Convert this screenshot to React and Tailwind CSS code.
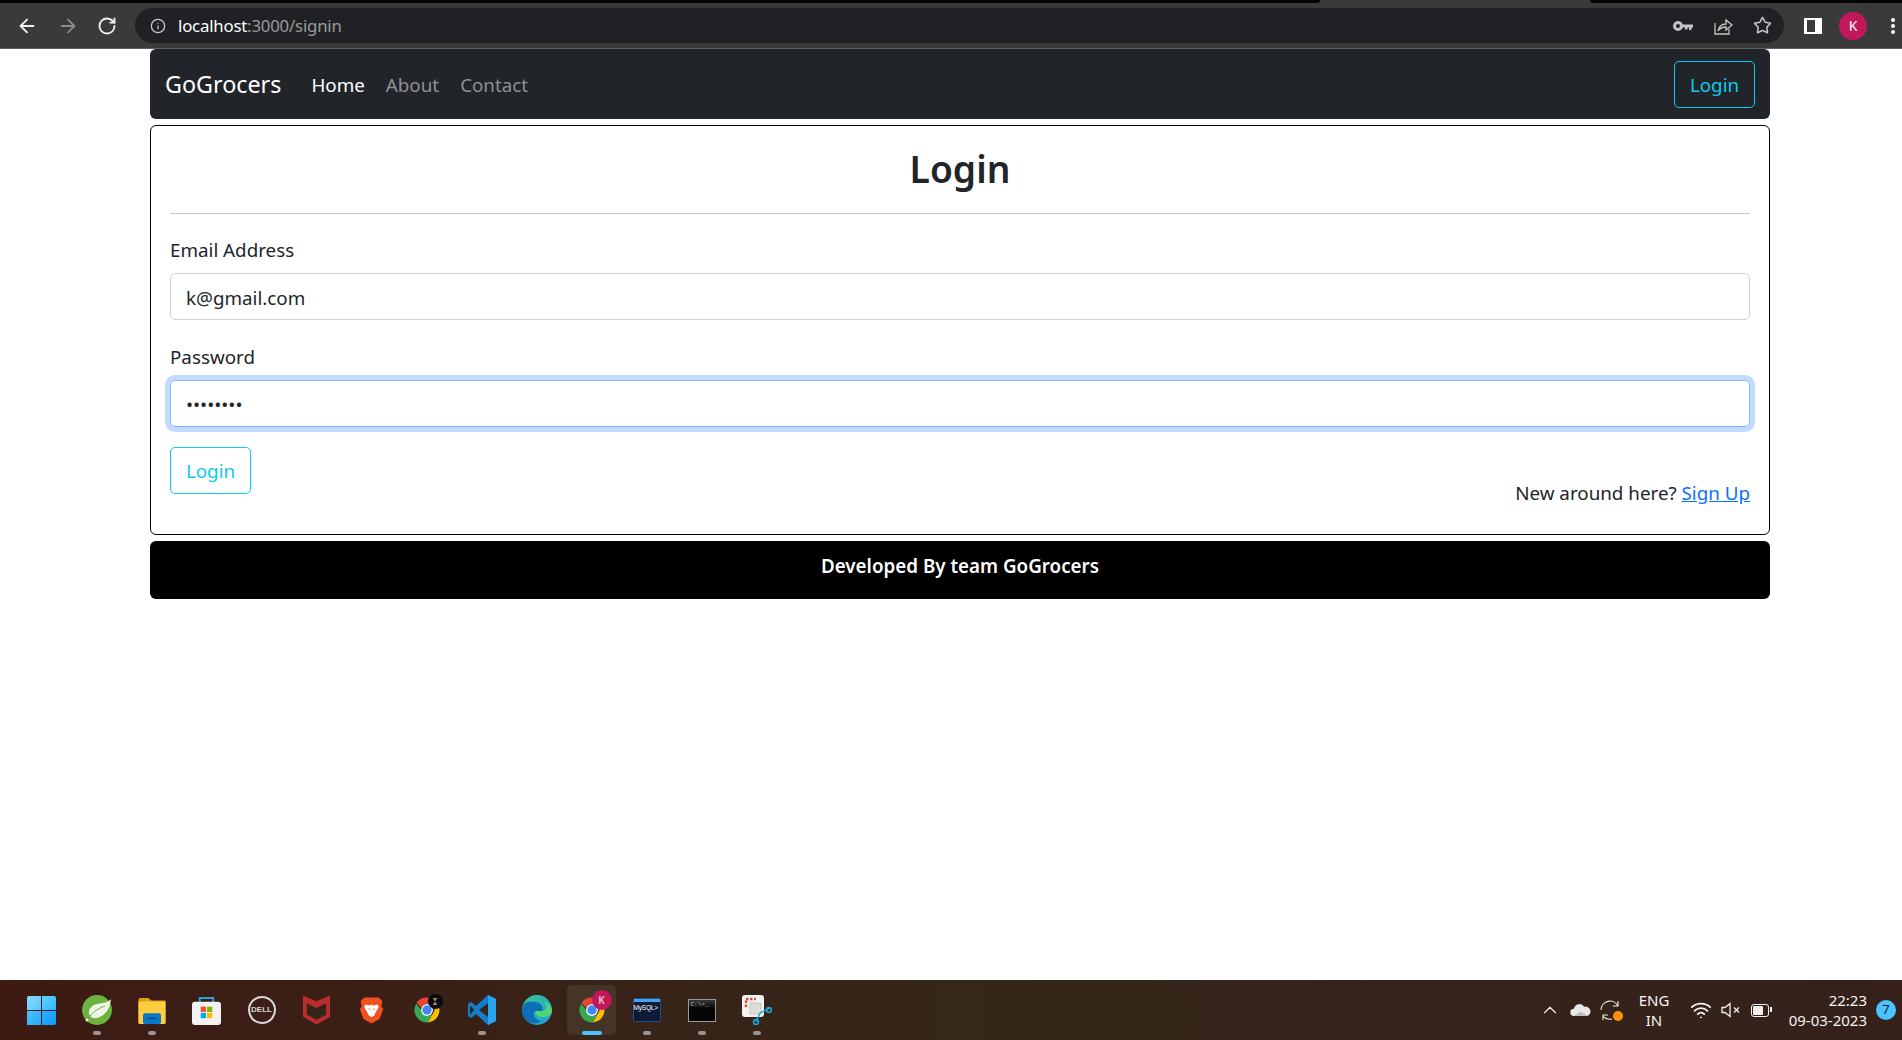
import React from 'react';
import { ArrowLeft, ArrowRight, RotateCw, Info, Star, ChevronUp, Wifi } from 'lucide-react';

const font = "font-['Noto_Sans','Open_Sans',sans-serif]";

const ChromeLogo = ({ badge }) => (
  <div className="relative w-[30px] h-[30px]">
    <svg viewBox="0 0 48 48" className="w-[30px] h-[30px]">
      <path d="M24 4a20 20 0 0 1 17.300 10H24a10 10 0 0 0-9.400 6.600L7.400 11.800A20 20 0 0 1 24 4z" fill="#ea4335" />
      <path d="M41.300 14A20 20 0 0 1 25 44l8.700-15A10 10 0 0 0 33 15z" fill="#fbbc04" />
      <path d="M7 13.500A20 20 0 0 0 25 44l8.200-14.200a10 10 0 0 1-17.500-4.200z" fill="#34a853" />
      <circle cx="24" cy="24" r="9.500" fill="#fff" />
      <circle cx="24" cy="24" r="7.500" fill="#4285f4" />
    </svg>
    {badge}
  </div>
);

const Spring = () => (
  <svg viewBox="0 0 30 30" className="w-[30px] h-[30px]">
    <circle cx="15" cy="15" r="15" fill="#6db33f" />
    <path d="M29 4c-1 10-6 17-14 19-4 1-7-1-8-4-1-5 3-9 8-10 5-1 11-1 14-5z" fill="#eef5e6" />
    <path d="M8 21c4-5 9-8 15-10" fill="none" stroke="#6db33f" strokeWidth="1" />
    <circle cx="5" cy="25" r="1.500" fill="#eef5e6" />
  </svg>
);

const Folder = () => (
  <svg viewBox="0 0 30 30" className="w-[30px] h-[27px]">
    <path d="M0 3a2 2 0 0 1 2-2h9l3 3h16v25H0z" fill="#dfa30e" />
    <rect x="0" y="5" width="30" height="25" rx="1" fill="#ffcd3f" />
    <rect x="5" y="18" width="20" height="12" rx="2" fill="#0a78c8" />
    <rect x="10" y="23" width="10" height="1.500" fill="#043f70" />
  </svg>
);

const Store = () => (
  <svg viewBox="0 0 30 30" className="w-[29px] h-[29px]">
    <path d="M8 8V2h14v6" fill="none" stroke="#1fa8e0" strokeWidth="2" />
    <rect x="0" y="6" width="30" height="24" rx="3" fill="#f2f2f2" />
    <rect x="9" y="11" width="5.500" height="5.500" fill="#f0512a" />
    <rect x="15.500" y="11" width="5.500" height="5.500" fill="#7eb900" />
    <rect x="9" y="17.500" width="5.500" height="5.500" fill="#01a5f0" />
    <rect x="15.500" y="17.500" width="5.500" height="5.500" fill="#ffb900" />
  </svg>
);

const Dell = () => (
  <div className="w-[28px] h-[28px] rounded-full border-2 border-[#d8d8d8] flex items-center justify-center text-[8px] font-bold text-[#d8d8d8] font-['Liberation_Sans',sans-serif]">
    DELL
  </div>
);

const McAfee = () => (
  <svg viewBox="0 0 28 30" className="w-[27px] h-[30px]">
    <path d="M0 0l14 6 14-6v22l-14 8-14-8z" fill="#b92d2d" />
    <path d="M4 8l10 5 10-5v12l-10 5-10-5z" fill="#33251a" />
  </svg>
);

const Brave = () => (
  <svg viewBox="0 0 30 30" className="w-[27px] h-[30px]">
    <path d="M7 1h16l4 4-1 6 2 3-4 11-9 5-9-5-4-11 2-3-1-6z" fill="#f1501f" />
    <path d="M8 9l5 1 2-1 2 1 5-1 1 3-3 5-2 4-3 2-3-2-2-4-3-5z" fill="#fff" />
    <path d="M11 13l3 1-1 1zM19 13l-3 1 1 1z" fill="#f1501f" />
  </svg>
);

const VsCode = () => (
  <svg viewBox="0 0 30 30" className="w-[30px] h-[30px]">
    <path d="M21 0l8 4v22l-8 4-12-11-5 4-3-2v-12l3-2 5 4z" fill="#0f7fcc" />
    <path d="M21 0l8 4v22l-8 4z" fill="#2aa3ef" />
    <path d="M21 8v14l-9-7z" fill="#33251a" />
    <path d="M4 11l3 4-3 4-1-1v-6z" fill="#33251a" />
  </svg>
);

const Edge = () => (
  <svg viewBox="0 0 30 30" className="w-[30px] h-[30px]">
    <defs>
      <linearGradient id="edge" x1="0" y1="0" x2="1" y2="1">
        <stop offset="0" stopColor="#39c98a" />
        <stop offset="1" stopColor="#1b9de2" />
      </linearGradient>
    </defs>
    <circle cx="15" cy="15" r="15" fill="url(#edge)" />
    <path d="M0 15C1 6 8 6 14 7c6 1 8 6 6 9h-7c-3 3 0 9 6 10-10 7-19-2-19-11z" fill="#0c6fb8" />
    <path d="M30 16c0-4-3-8-8-9 4 3 3 9-2 9h-6c-1 3 2 6 6 6 5 0 10-1 10-6z" fill="#5ee05c" opacity=".8" />
  </svg>
);

const MySql = () => (
  <div className="w-[28px] h-[24px] bg-[#0d1b36] border border-[#1f4f8f] rounded-[2px] flex flex-col">
    <div className="h-[3px] shrink-0 bg-[#4aa3e8]" />
    <span className="text-[6.500px] leading-[12px] tracking-[-0.2px] whitespace-nowrap text-white font-['Liberation_Sans',sans-serif]">MySQL&gt;</span>
  </div>
);

const Cmd = () => (
  <div className="w-[28px] h-[23px] bg-gradient-to-b from-[#3a3a3a] to-[#050505] to-40% border border-[#9a9a9a] flex flex-col">
    <span className="text-[6px] leading-[9px] pl-[2px] text-[#cccccc] font-['Liberation_Mono',monospace]">C:\&gt;_</span>
  </div>
);

const Snip = () => (
  <svg viewBox="0 0 30 30" className="w-[30px] h-[30px]">
    <rect x="0" y="0" width="22" height="22" rx="3" fill="#f2f2f2" />
    <path d="M4 12V4h10" fill="none" stroke="#e0512a" strokeWidth="2.500" strokeDasharray="2.500 1.500" />
    <rect x="8" y="8" width="11" height="11" fill="#dcdcdc" stroke="#c8c8c8" />
    <path d="M18 18l10-5M18 18l-4 9" stroke="#1fa8e0" strokeWidth="1.500" />
    <circle cx="14" cy="27" r="2.500" fill="none" stroke="#1fa8e0" strokeWidth="1.500" />
    <circle cx="27" cy="15" r="2.500" fill="none" stroke="#1fa8e0" strokeWidth="1.500" />
  </svg>
);

const Windows = () => (
  <div className="grid grid-cols-2 gap-[1px] w-[29px] h-[29px]">
    <div className="bg-gradient-to-br from-[#86dcfe] to-[#55c6fe] rounded-tl-[2px]" />
    <div className="bg-gradient-to-br from-[#5fd0fe] to-[#32b6fe] rounded-tr-[2px]" />
    <div className="bg-gradient-to-br from-[#4cc2fe] to-[#1fa9fd]" />
    <div className="bg-gradient-to-br from-[#2cb0fd] to-[#0f98fb] rounded-br-[2px]" />
  </div>
);

const taskbarApps = [
  { id: 'start', icon: <Windows /> },
  { id: 'spring', icon: <Spring />, pip: true },
  { id: 'files', icon: <Folder />, pip: true },
  { id: 'store', icon: <Store /> },
  { id: 'dell', icon: <Dell /> },
  { id: 'mcafee', icon: <McAfee /> },
  { id: 'brave', icon: <Brave /> },
  {
    id: 'chrome2',
    icon: (
      <ChromeLogo
        badge={
          <span className="absolute -top-[1px] -right-[1px] w-[15px] h-[15px] rounded-full bg-[#0a0a14] flex items-center justify-center">
            <span className="w-[5px] h-[7px] bg-[#a88a3a] [clip-path:polygon(0_0,100%_0,0_100%,100%_100%)]" />
          </span>
        }
      />
    ),
  },
  { id: 'code', icon: <VsCode />, pip: true },
  { id: 'edge', icon: <Edge /> },
  {
    id: 'chrome',
    active: true,
    icon: (
      <ChromeLogo
        badge={
          <span className={`absolute -top-[5px] -right-[5px] w-[20px] h-[20px] rounded-full bg-[#c2185b] text-[#f0c0d4] text-[10px] font-semibold flex items-center justify-center ${font}`}>
            K
          </span>
        }
      />
    ),
  },
  { id: 'mysql', icon: <MySql />, pip: true },
  { id: 'cmd', icon: <Cmd />, pip: true },
  { id: 'snip', icon: <Snip />, pip: true },
];

function BrowserBar() {
  return (
    <div className="h-[49px] bg-[#3a3a3a] shrink-0 border-b border-[#5f5f5f]">
      <div className="h-[3px] flex justify-between">
        <div className="w-[1320px] bg-black rounded-br-[8px]" />
        <div className="w-[312px] bg-black rounded-bl-[8px]" />
      </div>
      <div className="flex items-center h-[45px] pl-[16px]">
        <ArrowLeft className="w-[22px] h-[22px] text-[#f1f1f1]" strokeWidth={2} />
        <ArrowRight className="w-[22px] h-[22px] text-[#8a8a8a] ml-[19px]" strokeWidth={2} />
        <RotateCw className="w-[20px] h-[20px] text-[#f1f1f1] ml-[18px]" strokeWidth={2.200} />
        <div className="ml-[18px] w-[1649px] h-[35px] rounded-full bg-[#202124] flex items-center pl-[15px] pr-[12px]">
          <Info className="w-[16px] h-[16px] text-[#c4c4c4]" />
          <span className={`ml-[12px] text-[16.800px] tracking-[-0.2px] ${font}`}>
            <span className="text-white">localhost</span>
            <span className="text-[#9a9a9a]">:3000/signin</span>
          </span>
          <div className="ml-auto flex items-center gap-[20px]">
            <svg viewBox="0 0 20 12" className="w-[20px] h-[12px]">
              <circle cx="5" cy="6" r="3.500" fill="none" stroke="#c4c4c4" strokeWidth="3" />
              <path d="M8 4.500h12v3h-1.500v2.500h-2.500V7.500h-1.500v2h-2.500v-2H8z" fill="#c4c4c4" />
            </svg>
            <svg viewBox="0 0 20 20" className="w-[20px] h-[20px]" fill="none" stroke="#c4c4c4" strokeWidth="1.300">
              <path d="M2 7v11h14v-5" />
              <path d="M5 15c1-5 4-7 8-7V4l6 5-6 5v-3c-3 0-6 1-8 4z" />
            </svg>
            <Star className="w-[19px] h-[19px] text-[#c4c4c4]" />
          </div>
        </div>
        <div className="ml-[20px] w-[18px] h-[16px] bg-white flex items-center pl-[3px] py-[2px]">
          <div className="w-[8px] h-[12px] bg-[#3a3a3a]" />
        </div>
        <div className={`ml-[17px] w-[28px] h-[28px] rounded-full bg-[#c2185b] text-white text-[14px] flex items-center justify-center ${font}`}>
          K
        </div>
        <div className="ml-[24px] flex flex-col gap-[2px]">
          <span className="w-[4px] h-[4px] rounded-full bg-white" />
          <span className="w-[4px] h-[4px] rounded-full bg-white" />
          <span className="w-[4px] h-[4px] rounded-full bg-white" />
        </div>
      </div>
    </div>
  );
}

function SignIn() {
  return (
    <div className={`flex-1 bg-white ml-[150px] mr-[132px] text-[18.800px] text-[#212529] ${font}`}>
      <nav className="h-[70px] bg-[#212529] rounded-[6px] flex items-center pl-[15px] pr-[15px]">
        <span className="text-[23.300px] text-white">GoGrocers</span>
        <div className="flex items-center gap-[21px] ml-[30px] pt-[2px]">
          <a className="text-white">Home</a>
          <a className="text-[#8f9193]">About</a>
          <a className="text-[#8f9193]">Contact</a>
        </div>
        <button className="ml-auto h-[47px] w-[81px] border border-[#0dcaf0] rounded-[5px] text-[#0dcaf0] pt-[2px]">Login</button>
      </nav>
      <div className="mt-[6px] h-[410px] border border-black rounded-[6px] px-[19px] pt-[20px]">
        <h2 className="text-[37.200px] font-semibold text-center leading-[46px] text-[#212529]">Login</h2>
        <hr className="mt-[21px] border-[#c8c9ca]" />
        <label className="block mt-[22px] leading-[28px]">Email Address</label>
        <input
          readOnly
          value="k@gmail.com"
          className="block mt-[9px] w-full h-[47px] border border-[#ced4da] rounded-[5px] px-[15px] pt-[2px] outline-none"
        />
        <label className="block mt-[23px] leading-[28px]">Password</label>
        <input
          readOnly
          type="password"
          value="kkkkkkkk"
          className="block mt-[9px] w-full h-[47px] border border-[#86b7fe] rounded-[5px] px-[15px] outline-none ring-[5px] ring-[#c2dbfe] text-[#212529]"
        />
        <div className="flex justify-between items-end mt-[20px]">
          <button className="w-[81px] h-[47px] border border-[#0dcaf0] rounded-[5px] text-[#0dcaf0] pt-[2px]">Login</button>
          <p className="leading-[28px] -mb-[13px]">
            New around here? <a className="text-[#0d6efd] underline">Sign Up</a>
          </p>
        </div>
      </div>
      <footer className="mt-[6px] h-[58px] bg-black rounded-[6px] text-white font-semibold text-center pt-[11px] leading-[28px]">
        Developed By team GoGrocers
      </footer>
    </div>
  );
}

function Taskbar() {
  return (
    <div className={`h-[60px] shrink-0 flex items-center bg-gradient-to-r from-[#3d1a14] via-[#35271a] to-[#35211a] pl-[14px] pr-[6px] ${font}`}>
      {taskbarApps.map((app) => (
        <div key={app.id} className="relative w-[55px] h-[60px] flex items-center justify-center">
          {app.active && <div className="absolute left-[3px] top-[5px] w-[49px] h-[50px] rounded-[5px] bg-[#4a3d2f]/70" />}
          <div className="relative">{app.icon}</div>
          {app.pip && !app.active && <span className="absolute bottom-[5px] left-[24px] w-[8px] h-[4px] rounded-full bg-[#9c9490]" />}
          {app.active && <span className="absolute bottom-[5px] left-[18px] w-[20px] h-[4px] rounded-full bg-[#4cc2ff]" />}
        </div>
      ))}
      <div className="ml-auto flex items-center text-[#f4f4f4]">
        <ChevronUp className="w-[22px] h-[22px]" strokeWidth={1.200} />
        <svg viewBox="0 0 22 14" className="w-[21px] h-[13px] ml-[9px]">
          <path d="M4 13a4 4 0 0 1 0-8 6 6 0 0 1 11-2 5 5 0 0 1 3 10z" fill="#e8e8e8" />
          <path d="M4 13l7-5 8 5z" fill="#bdbdbd" />
        </svg>
        <div className="relative w-[22px] h-[22px] ml-[9px]">
          <svg viewBox="0 0 22 22" className="w-[22px] h-[22px]" fill="none" stroke="#f0f0f0" strokeWidth="1.100">
            <path d="M1 11a9 9 0 0 1 17-4M18 2v5h-5" />
            <path d="M12 20a9 9 0 0 1-9-3M3 21v-5h5" />
          </svg>
          <span className="absolute right-[-1px] bottom-[0px] w-[10px] h-[10px] rounded-full bg-[#f9920c]" />
        </div>
        <div className="w-[40px] ml-[12px] text-center text-[15px] leading-[20px]">
          <div>ENG</div>
          <div>IN</div>
        </div>
        <Wifi className="w-[22px] h-[22px] ml-[16px]" strokeWidth={2} />
        <svg viewBox="0 0 20 16" className="w-[20px] h-[16px] ml-[9px]" fill="none" stroke="#f4f4f4" strokeWidth="1.300">
          <path d="M1 5.500h3L9 1.500v13l-5-4H1z" />
          <path d="M13 5.500l5 5M18 5.500l-5 5" />
        </svg>
        <div className="ml-[10px] w-[18px] h-[13px] border-[1.500px] border-[#f0f0f0] rounded-[3px] p-[1px] relative">
          <div className="w-[10px] h-full bg-[#f0f0f0] rounded-[1px]" />
          <span className="absolute -right-[4px] top-[2px] w-[2px] h-[5px] bg-[#f0f0f0]" />
        </div>
        <div className="w-[91px] ml-[7px] text-right text-[15px] leading-[20px]">
          <div>22:23</div>
          <div>09-03-2023</div>
        </div>
        <div className="ml-[9px] w-[20px] h-[20px] rounded-full bg-[#4cc2ff] text-[#1a1a1a] text-[13px] flex items-center justify-center">7</div>
      </div>
    </div>
  );
}

export default function App() {
  return (
    <div className="h-[1040px] w-[1902px] flex flex-col bg-white overflow-hidden">
      <BrowserBar />
      <SignIn />
      <Taskbar />
    </div>
  );
}
